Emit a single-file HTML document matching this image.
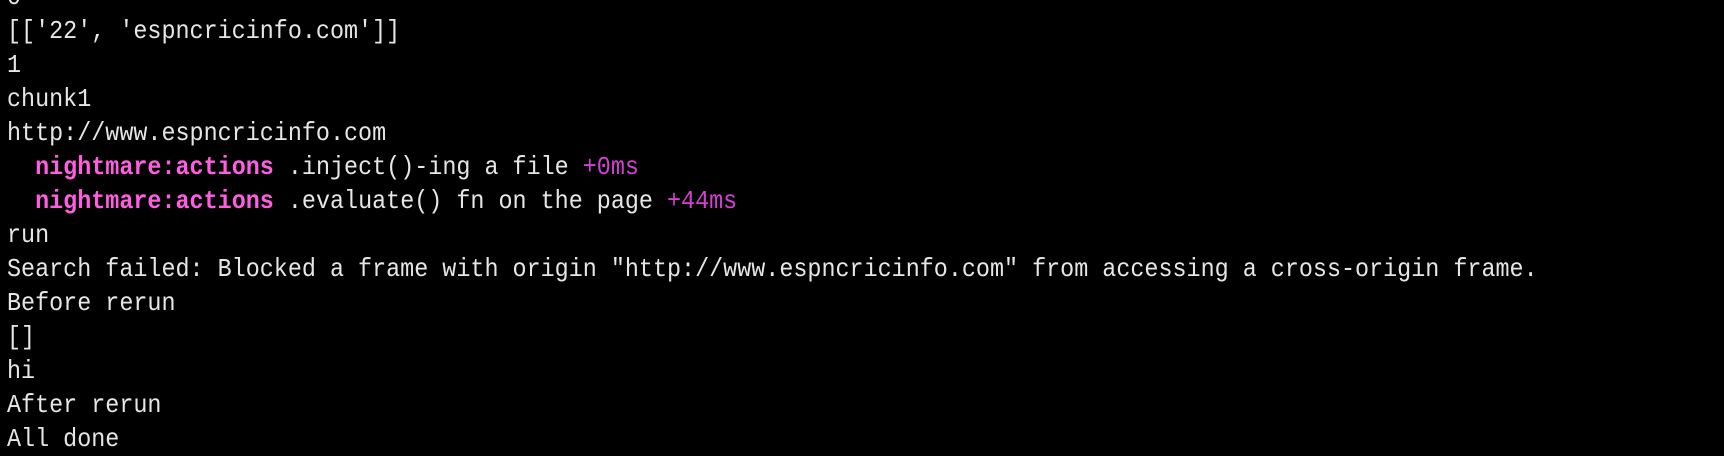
<!DOCTYPE html>
<html><head><meta charset="utf-8"><style>
html,body{margin:0;padding:0;background:#000;width:1724px;height:444px;overflow:hidden}
pre{margin:0;position:absolute;left:7px;top:-20px;font-family:"Liberation Mono",monospace;font-size:26px;letter-spacing:0;line-height:34px;color:#e6e6e6;transform:scaleX(0.9);transform-origin:0 0}
.b{color:#ff5ee0;font-weight:bold}
.m{color:#d43fd4}
</style></head><body><pre>0
[['22', 'espncricinfo.com']]
1
chunk1
http://www.espncricinfo.com
  <span class="b">nightmare:actions</span> .inject()-ing a file <span class="m">+0ms</span>
  <span class="b">nightmare:actions</span> .evaluate() fn on the page <span class="m">+44ms</span>
run
Search failed: Blocked a frame with origin "http://www.espncricinfo.com" from accessing a cross-origin frame.
Before rerun
[]
hi
After rerun
All done</pre></body></html>
